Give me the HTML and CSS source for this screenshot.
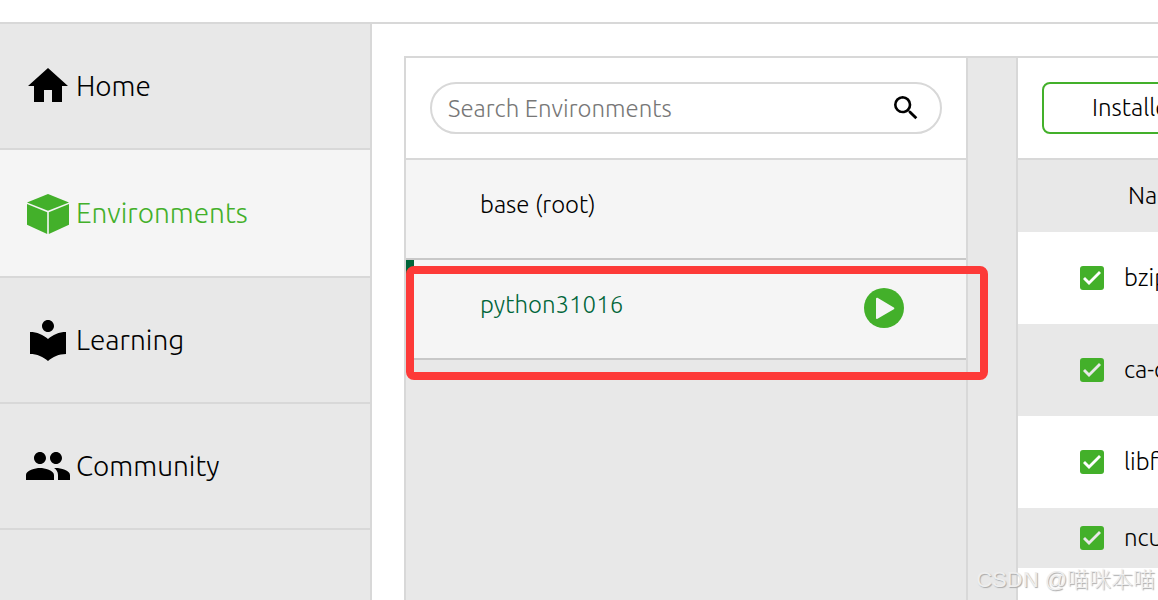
FILE: index.html
```html
<!DOCTYPE html>
<html lang="en">
<head>
    <meta charset="UTF-8">
    <meta name="viewport" content="width=device-width, initial-scale=1.0">
    <title>Environments</title>
    <link rel="stylesheet" href="styles.css">
</head>
<body>
<div class="app">
    <header class="topbar"></header>
    <div class="body">
        <nav class="sidebar">
            <a class="nav-item" href="#home">
                <svg class="nav-icon" viewBox="0 0 24 24"><path d="M10 20v-6h4v6h5v-8h3L12 3 2 12h3v8z"/></svg>
                <span>Home</span>
            </a>
            <a class="nav-item active" href="#environments">
                <svg class="nav-icon" viewBox="0 0 48 48">
                    <path d="M24 5 45 13.4 24 21.8 3 13.4z"/>
                    <path d="M3 15 23.2 23.2V45L3 35.8z"/>
                    <path d="M45 15 24.8 23.2V45L45 35.8z"/>
                </svg>
                <span>Environments</span>
            </a>
            <a class="nav-item" href="#learning">
                <svg class="nav-icon" viewBox="0 0 24 24"><path d="M12 11.55C9.64 9.35 6.48 8 3 8v11c3.48 0 6.64 1.35 9 3.55 2.36-2.19 5.52-3.55 9-3.55V8c-3.48 0-6.64 1.35-9 3.55zM12 8c1.66 0 3-1.34 3-3s-1.34-3-3-3-3 1.34-3 3 1.34 3 3 3z"/></svg>
                <span>Learning</span>
            </a>
            <a class="nav-item" href="#community">
                <svg class="nav-icon" viewBox="0 0 24 24"><path d="M16 11c1.66 0 2.99-1.34 2.99-3S17.66 5 16 5c-1.66 0-3 1.34-3 3s1.34 3 3 3zm-8 0c1.66 0 2.99-1.34 2.99-3S9.66 5 8 5C6.34 5 5 6.34 5 8s1.34 3 3 3zm0 2c-2.33 0-7 1.17-7 3.5V19h14v-2.5c0-2.33-4.67-3.5-7-3.5zm8 0c-.29 0-.62.02-.97.05 1.16.84 1.97 1.97 1.97 3.45V19h6v-2.5c0-2.33-4.67-3.5-7-3.5z"/></svg>
                <span>Community</span>
            </a>
        </nav>
        <main class="content">
            <div class="workspace">
                <section class="environments">
                    <div class="panel-head">
                        <label class="search">
                            <input class="search-input" type="text" placeholder="Search Environments" aria-label="Search Environments">
                            <svg class="search-icon" viewBox="0 0 24 24"><path d="M15.5 14h-.79l-.28-.27A6.47 6.47 0 0 0 16 9.5 6.5 6.5 0 1 0 9.5 16c1.61 0 3.09-.59 4.23-1.57l.27.28v.79l5 4.99L20.49 19l-4.99-5zm-6 0C7.01 14 5 11.99 5 9.5S7.01 5 9.5 5 14 7.01 14 9.5 11.99 14 9.5 14z"/></svg>
                        </label>
                    </div>
                    <ul class="env-list">
                        <li class="env">
                            <a class="env-name" href="#base">base (root)</a>
                        </li>
                        <li class="env selected">
                            <a class="env-name" href="#python31016">python31016</a>
                            <button class="play" type="button" aria-label="Run python31016">
                                <svg viewBox="0 0 40 40">
                                    <circle cx="20" cy="20" r="20" fill="#43b02a"/>
                                    <path d="M13 10.7 29.3 20.4 13 30z" fill="#f5f5f5" stroke="#f5f5f5" stroke-width="2" stroke-linejoin="round"/>
                                </svg>
                            </button>
                            <span class="highlight"></span>
                        </li>
                    </ul>
                </section>
                <div class="splitter"></div>
                <section class="packages">
                    <div class="panel-head">
                        <select class="filter" aria-label="Package filter">
                            <option>Installed</option>
                            <option>Not installed</option>
                            <option>Updatable</option>
                        </select>
                    </div>
                    <table class="package-table">
                        <thead>
                            <tr><th></th><th>Name</th></tr>
                        </thead>
                        <tbody>
                            <tr>
                                <td><input class="check" type="checkbox" id="bzip2" checked></td>
                                <td><label for="bzip2">bzip2</label></td>
                            </tr>
                            <tr>
                                <td><input class="check" type="checkbox" id="ca" checked></td>
                                <td><label for="ca">ca-certificates</label></td>
                            </tr>
                            <tr>
                                <td><input class="check" type="checkbox" id="libffi" checked></td>
                                <td><label for="libffi">libffi</label></td>
                            </tr>
                            <tr class="short">
                                <td><input class="check" type="checkbox" id="ncurses" checked></td>
                                <td><label for="ncurses">ncurses</label></td>
                            </tr>
                        </tbody>
                    </table>
                </section>
            </div>
        </main>
    </div>
    <div class="watermark">CSDN @喵咪本喵</div>
</div>
</body>
</html>
```
FILE: styles.css
```css
:root {
    --green: #43b02a;
    --dark-green: #00653a;
    --line: #d8d8d8;
    --grey: #e8e8e8;
    --light: #f5f5f5;
}
* {
    box-sizing: border-box;
}
html, body {
    margin: 0;
    padding: 0;
}
body {
    font-family: Ubuntu, "Open Sans", "Noto Sans CJK SC", sans-serif;
    font-size: 24px;
    font-weight: 300;
    line-height: 34px;
    color: #000;
    background-color: #fff;
}
a {
    color: inherit;
    text-decoration: none;
}
.app {
    position: relative;
    display: flex;
    flex-direction: column;
    height: 100vh;
    overflow: hidden;
}
.topbar {
    flex: none;
    height: 24px;
    border-bottom: 2px solid var(--line);
}
.body {
    flex: 1;
    display: grid;
    grid-template-columns: 372px minmax(0, 1fr);
    min-height: 0;
}

/* sidebar */
.sidebar {
    background-color: var(--grey);
    border-right: 2px solid var(--line);
}
.nav-item {
    display: flex;
    align-items: center;
    gap: 4px;
    padding: 38px 24px;
    border-bottom: 2px solid var(--line);
    font-size: 28px;
}
.nav-item.active {
    padding: 39px 24px;
    color: var(--green);
    background-color: var(--light);
}
.nav-icon {
    width: 48px;
    height: 48px;
    fill: currentColor;
}

/* workspace */
.content {
    display: flex;
    padding: 32px 0 0 32px;
    min-height: 0;
}
.workspace {
    flex: 1;
    display: grid;
    grid-template-columns: minmax(0, 564px) 48px minmax(0, 1fr);
    min-width: 0;
    border-top: 2px solid var(--line);
    background-color: var(--grey);
}
.environments {
    border-left: 2px solid var(--line);
    border-right: 2px solid var(--line);
}
.panel-head {
    padding: 24px;
    border-bottom: 2px solid var(--line);
    background-color: #fff;
}
.search {
    display: flex;
    align-items: center;
    height: 52px;
    padding: 0 18px 0 16px;
    border: 2px solid var(--line);
    border-radius: 26px;
}
.search-input {
    flex: 1;
    min-width: 0;
    padding: 2px 0 0;
    border: 0;
    outline: 0;
    background: none;
    font: inherit;
}
.search-input::placeholder {
    color: #777;
    opacity: 1;
}
.search-icon {
    width: 32px;
    height: 32px;
}
.env-list {
    margin: 0;
    padding: 0;
    list-style: none;
}
.env {
    position: relative;
    display: flex;
    justify-content: space-between;
    height: 100px;
    padding: 28px 62px 0 74px;
    border-bottom: 2px solid #c8c8c8;
    background-color: var(--light);
}
.env.selected {
    padding-left: 66px;
    border-left: 8px solid var(--dark-green);
    color: var(--dark-green);
}
.play {
    width: 40px;
    height: 40px;
    padding: 0;
    border: 0;
    background: none;
}
.play svg {
    display: block;
}
.highlight {
    position: absolute;
    top: 6px;
    right: -22px;
    bottom: -22px;
    left: -8px;
    z-index: 1;
    border: 8px solid #fd3a38;
    border-radius: 8px;
    pointer-events: none;
}

/* packages */
.packages {
    overflow: hidden;
    border-left: 2px solid var(--line);
    background-color: #fff;
}
.filter {
    width: 260px;
    height: 52px;
    padding: 0 48px;
    border: 2px solid var(--green);
    border-radius: 8px;
    appearance: none;
    background-color: #fff;
    color: #000;
    font: inherit;
}
.package-table {
    min-width: 100%;
    border-collapse: collapse;
    white-space: nowrap;
}
.package-table th {
    height: 72px;
    padding: 0 24px;
    background-color: var(--grey);
    font-weight: 300;
    text-align: left;
}
.package-table td {
    height: 92px;
    padding: 0 20px;
}
.package-table td:first-child {
    width: 86px;
    padding: 0 0 0 62px;
}
.package-table .short td {
    height: 60px;
}
.package-table tbody tr:nth-child(even) {
    background-color: var(--grey);
}
.check {
    display: block;
    width: 24px;
    height: 24px;
    margin: 0;
    border-radius: 3px;
    appearance: none;
    background-color: var(--green);
}
.check:checked::before {
    content: "";
    display: block;
    height: 24px;
    background-color: #fff;
    clip-path: polygon(9px 15px, 5px 11px, 3px 13px, 9px 19px, 21px 7px, 19px 5px);
}
tr:nth-child(even) .check:checked::before {
    background-color: var(--grey);
}

.watermark {
    position: absolute;
    right: 3px;
    bottom: 3px;
    font-family: "Liberation Sans", "Noto Sans CJK SC", sans-serif;
    font-size: 22px;
    color: #eee;
    text-shadow: 1px 1px 1px #aaa;
}
```
